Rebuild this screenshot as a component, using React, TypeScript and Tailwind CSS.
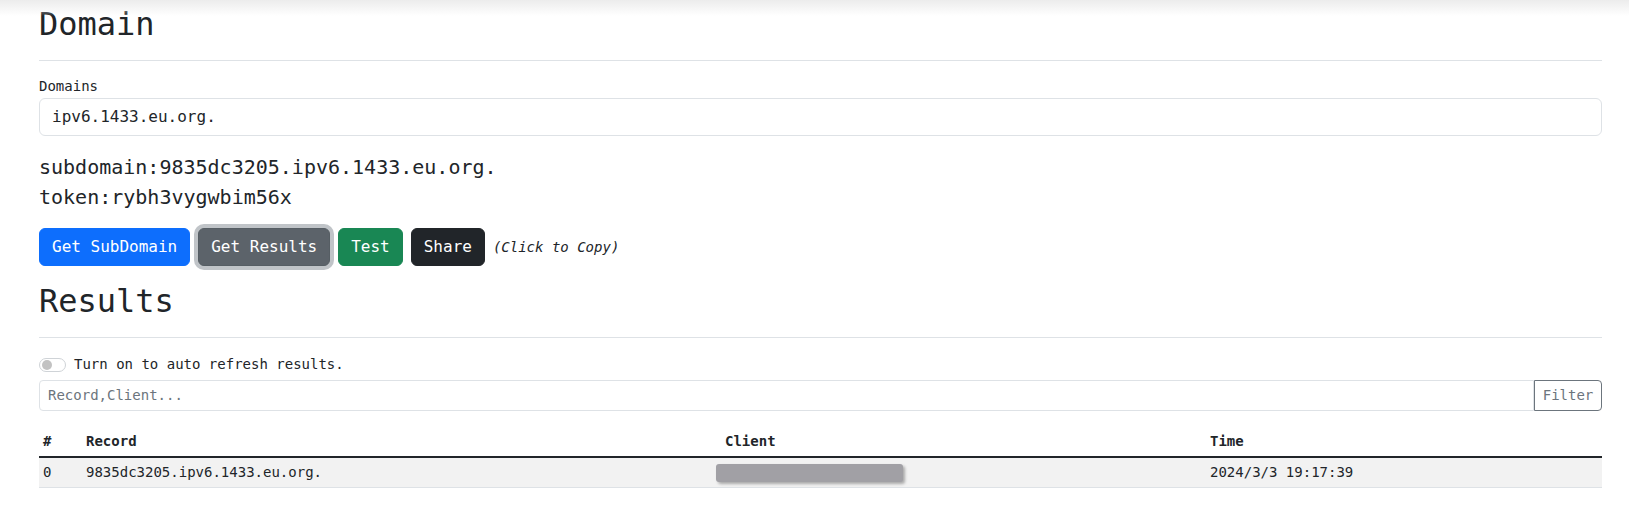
import React from "react";

export default function App() {
  return (
    <div className="relative min-h-screen bg-white text-[#212529] font-['DejaVu_Sans_Mono',monospace]">
      <div className="pointer-events-none absolute inset-x-0 top-0 h-[16px] bg-gradient-to-b from-[#ececec] to-[rgba(255,255,255,0)]" />
      <div className="pl-[39px] pr-[27px] pt-[5px]">
        <h2 className="text-[32px] leading-[38.4px] font-normal">Domain</h2>
        <hr className="mt-[17px] border-0 border-t border-[#dee2e6]" />
        <label className="block mt-[15px] text-[14px] leading-[21px]">Domains</label>
        <div className="mt-[1px] h-[38px] rounded-[6px] border border-[#dee2e6] px-[12px] flex items-center text-[16px]">
          ipv6.1433.eu.org.
        </div>
        <div className="mt-[16px] text-[20px] leading-[30px]">
          <div>subdomain:9835dc3205.ipv6.1433.eu.org.</div>
          <div>token:rybh3vygwbim56x</div>
        </div>
        <div className="mt-[16px] flex items-center gap-[8px]">
          <button className="h-[38px] px-[12px] rounded-[6px] border border-[#0d6efd] bg-[#0d6efd] text-white text-[16px] leading-[24px]">
            Get SubDomain
          </button>
          <button className="h-[38px] px-[12px] rounded-[6px] border border-[#565e64] bg-[#5c636a] text-white text-[16px] leading-[24px] shadow-[0_0_0_4px_rgba(130,138,145,0.5)]">
            Get Results
          </button>
          <button className="h-[38px] px-[12px] rounded-[6px] border border-[#198754] bg-[#198754] text-white text-[16px] leading-[24px]">
            Test
          </button>
          <button className="h-[38px] px-[12px] rounded-[6px] border border-[#212529] bg-[#212529] text-white text-[16px] leading-[24px]">
            Share
          </button>
          <span className="text-[14px] italic">(Click to Copy)</span>
        </div>
        <h2 className="mt-[16px] text-[32px] leading-[38.4px] font-normal">Results</h2>
        <hr className="mt-[16px] border-0 border-t border-[#dee2e6]" />
        <div className="mt-[15px] h-[24px] flex items-center text-[14px]">
          <span className="w-[27px] h-[14px] rounded-full border border-[#cfd3d7] flex items-center px-[2px]">
            <span className="w-[10px] h-[10px] rounded-full bg-[#c2c2c2]" />
          </span>
          <span className="ml-[8px]">Turn on to auto refresh results.</span>
        </div>
        <div className="mt-[3px] flex h-[31px]">
          <div className="flex-1 rounded-l-[4px] border border-[#dee2e6] px-[8px] flex items-center text-[14px] text-[#6c757d]">
            Record,Client...
          </div>
          <button className="w-[68px] rounded-r-[4px] border border-[#6c757d] text-[14px] text-[#6c757d]">
            Filter
          </button>
        </div>
        <table className="mt-[16px] w-full table-fixed border-collapse text-[14px] leading-[21px]">
          <colgroup>
            <col className="w-[43px]" />
            <col className="w-[639px]" />
            <col className="w-[485px]" />
            <col />
          </colgroup>
          <thead>
            <tr className="border-b-2 border-[#212529]">
              <th className="p-[4px] text-left font-bold">#</th>
              <th className="p-[4px] text-left font-bold">Record</th>
              <th className="p-[4px] text-left font-bold">Client</th>
              <th className="p-[4px] text-left font-bold">Time</th>
            </tr>
          </thead>
          <tbody>
            <tr className="bg-[#f2f2f2] border-b border-[#dee2e6]">
              <td className="p-[4px]">0</td>
              <td className="p-[4px]">9835dc3205.ipv6.1433.eu.org.</td>
              <td className="p-[4px]">
                <span className="inline-block align-middle -ml-[9px] w-[187px] h-[18px] rounded-[3px] bg-[#a1a0a5] shadow-[2px_2px_3px_rgba(0,0,0,0.3)]" />
              </td>
              <td className="p-[4px]">2024/3/3 19:17:39</td>
            </tr>
          </tbody>
        </table>
      </div>
    </div>
  );
}
